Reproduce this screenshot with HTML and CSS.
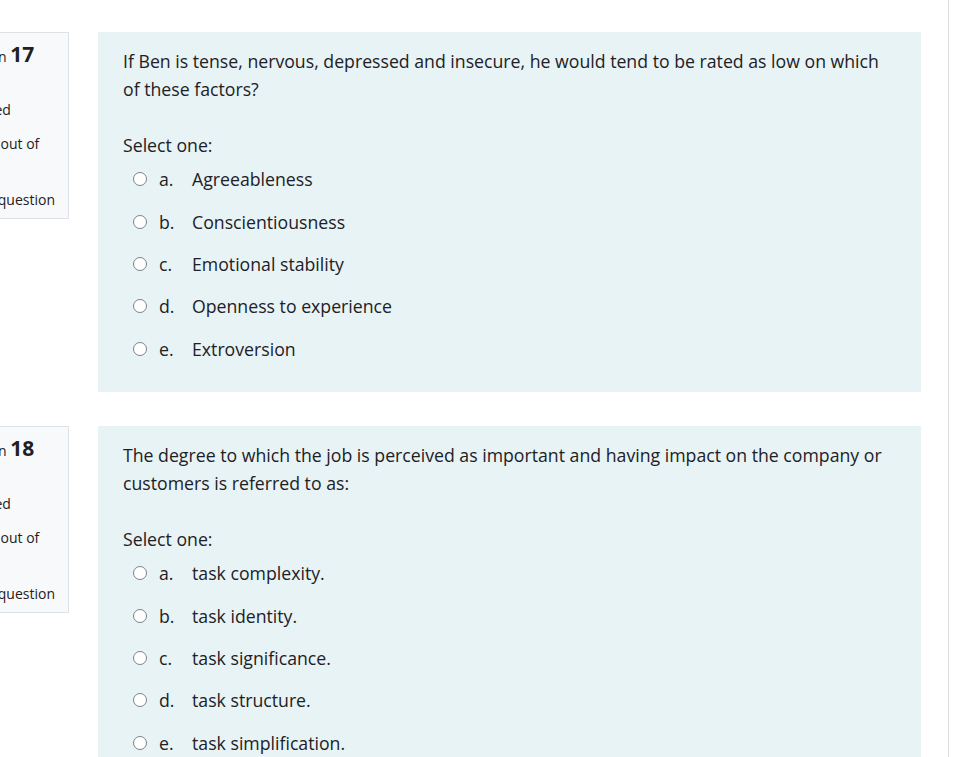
FILE: index.html
```html
<!DOCTYPE html>
<html>
<head>
<meta charset="utf-8">
<link rel="stylesheet" href="styles.css">
</head>
<body>
<div class="page">
  <main class="main">
    <div class="que">
      <div class="info">
        <h3 class="qtitle">Question <span class="qno">17</span></h3>
        <div class="state">Not yet<br>answered</div>
        <div class="grade">Marked out of<br>1.00</div>
        <div class="flag"><svg class="flagicon" viewBox="0 0 16 16" width="16" height="16"><path d="M3 1v14M3 2h9l-2 3 2 3H3" fill="none" stroke="#6a737b" stroke-width="1.5"/></svg>Flag question</div>
      </div>
      <div class="content">
        <div class="qtext">If Ben is tense, nervous, depressed and insecure, he would tend to be rated as low on which of these factors?</div>
        <div class="prompt">Select one:</div>
        <div class="answers">
          <label class="opt"><span class="radio"></span><span class="letter">a.</span><span class="text">Agreeableness</span></label>
          <label class="opt"><span class="radio"></span><span class="letter">b.</span><span class="text">Conscientiousness</span></label>
          <label class="opt"><span class="radio"></span><span class="letter">c.</span><span class="text">Emotional stability</span></label>
          <label class="opt"><span class="radio"></span><span class="letter">d.</span><span class="text">Openness to experience</span></label>
          <label class="opt"><span class="radio"></span><span class="letter">e.</span><span class="text">Extroversion</span></label>
        </div>
      </div>
    </div>
    <div class="que">
      <div class="info">
        <h3 class="qtitle">Question <span class="qno">18</span></h3>
        <div class="state">Not yet<br>answered</div>
        <div class="grade">Marked out of<br>1.00</div>
        <div class="flag"><svg class="flagicon" viewBox="0 0 16 16" width="16" height="16"><path d="M3 1v14M3 2h9l-2 3 2 3H3" fill="none" stroke="#6a737b" stroke-width="1.5"/></svg>Flag question</div>
      </div>
      <div class="content">
        <div class="qtext">The degree to which the job is perceived as important and having impact on the company or customers is referred to as:</div>
        <div class="prompt">Select one:</div>
        <div class="answers">
          <label class="opt"><span class="radio"></span><span class="letter">a.</span><span class="text">task complexity.</span></label>
          <label class="opt"><span class="radio"></span><span class="letter">b.</span><span class="text">task identity.</span></label>
          <label class="opt"><span class="radio"></span><span class="letter">c.</span><span class="text">task significance.</span></label>
          <label class="opt"><span class="radio"></span><span class="letter">d.</span><span class="text">task structure.</span></label>
          <label class="opt"><span class="radio"></span><span class="letter">e.</span><span class="text">task simplification.</span></label>
        </div>
      </div>
    </div>
  </main>
  <div class="rail"></div>
</div>
</body>
</html>
```

FILE: styles.css
```css
html, body {
  margin: 0;
  padding: 0;
  background: #fff;
  overflow: hidden;
}
body {
  font-family: "Open Sans", "Noto Sans", sans-serif;
  color: #1d2125;
  width: 978px;
  height: 757px;
}
.page {
  display: flex;
  height: 757px;
}
.main {
  width: 948px;
  padding-top: 32px;
  display: flex;
  flex-direction: column;
  gap: 34px;
}
.rail {
  width: 1px;
  background: #dcdcdc;
}
.que {
  display: flex;
  gap: 29px;
}
.info {
  flex: none;
  width: 131px;
  margin-left: -62px;
  height: 187px;
  box-sizing: border-box;
  background: #f8f9fa;
  border: 1px solid #dee2e6;
  padding: 6px 8px;
  font-size: 14px;
  line-height: 20px;
  white-space: nowrap;
}
.qtitle {
  margin: 0 0 8px;
  font-size: 14px;
  font-weight: 400;
  line-height: 30px;
}
.qno {
  font-size: 21px;
  font-weight: 700;
}
.state { margin-bottom: 14px; }
.grade { margin-bottom: 16px; }
.flag {
  display: flex;
  align-items: center;
  gap: 5px;
}
.content {
  width: 823px;
  box-sizing: border-box;
  background: #e7f3f5;
  padding: 15px 25px 22px;
  font-size: 17.7px;
  line-height: 28px;
}
.qtext {
  margin-bottom: 28px;
}
.prompt {
  margin-bottom: -1px;
}
.opt {
  display: flex;
  align-items: center;
  height: 42.4px;
  padding-left: 10px;
}
.radio {
  width: 14px;
  height: 14px;
  box-sizing: border-box;
  border: 1.5px solid #7d8288;
  border-radius: 50%;
  background: #fff;
  margin-right: 12px;
}
.letter {
  width: 33px;
}
```
